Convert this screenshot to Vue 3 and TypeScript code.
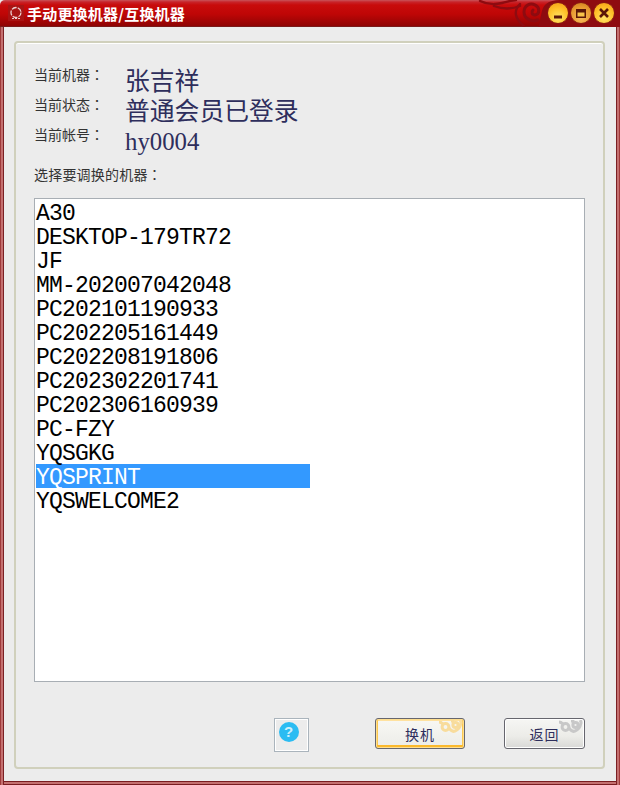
<script setup lang="ts">
const machines: string[] = [
  'A30', 'DESKTOP-179TR72', 'JF', 'MM-202007042048', 'PC202101190933', 'PC202205161449',
  'PC202208191806', 'PC202302201741', 'PC202306160939', 'PC-FZY', 'YQSGKG', 'YQSPRINT', 'YQSWELCOME2',
]
const selected = 'YQSPRINT'
const infos = [
  { label: '当前机器：', value: '张吉祥' },
  { label: '当前状态：', value: '普通会员已登录' },
  { label: '当前帐号：', value: 'hy0004' },
]
</script>

<template>
  <div class="window">
    <header class="titlebar">
      <svg class="logo" width="16" height="16" viewBox="0 0 16 16">
        <rect width="16" height="16" fill="#a81414" />
        <circle cx="8" cy="7.5" r="5" fill="none" stroke="#ecd0d0" stroke-width="1.3" stroke-dasharray="5 1.2" />
        <path d="M4 13.5h8" stroke="#ecd0d0" stroke-width="1" stroke-dasharray="2 1" />
      </svg>
      <span class="title">手动更换机器/互换机器</span>
      <svg class="swirl" width="146" height="27" viewBox="0 0 146 27">
        <path d="M64 27c4-8 2-18 8-23 4-3 8-4 14-4h60v27z" fill="#8e0b10" />
        <g fill="none" stroke="#8e0b10" stroke-width="2.4" stroke-linecap="round">
          <path d="M6 1c6 3 14 4 22 2 5-1 10-3 14-3" />
          <path d="M20 6c8 3 18 3 26 0" />
          <path d="M64 20c-7 3-14-2-14-8 0-6 6-10 11-7 5 2 5 9 0 10-3 0-4-3-2-5" stroke-width="3" />
          <path d="M46 4c-3 3-5 6-4 11 1 5 4 8 8 11" />
        </g>
      </svg>
      <div class="controls">
        <button class="ctl">
          <svg width="22" height="22" viewBox="0 0 22 22"><rect x="7" y="13.5" width="8" height="3" fill="#5b1708" /></svg>
        </button>
        <button class="ctl muted">
          <svg width="22" height="22" viewBox="0 0 22 22"><rect x="6" y="7" width="10" height="9" fill="#5b1708" /><rect x="7.5" y="10.5" width="7" height="4" fill="#f8c44a" /></svg>
        </button>
        <button class="ctl">
          <svg width="22" height="22" viewBox="0 0 22 22"><path d="M7 7l8 8M15 7l-8 8" stroke="#5b1708" stroke-width="2.6" /></svg>
        </button>
      </div>
    </header>

    <main class="body">
      <section class="panel">
        <div class="infos">
          <div v-for="info in infos" :key="info.label" class="info">
            <span class="label">{{ info.label }}</span>
            <span class="value">{{ info.value }}</span>
          </div>
        </div>
        <div class="pick">选择要调换的机器：</div>
        <ul class="list">
          <li v-for="m in machines" :key="m" class="row" :class="{ selected: m === selected }">{{ m }}</li>
        </ul>
        <footer class="actions">
          <button class="help">
            <span class="help-dot">?</span>
          </button>
          <button class="btn primary">
            <svg class="curl" width="24" height="16" viewBox="0 0 24 16"><g fill="none" stroke="#f8dc9c" stroke-width="3"><circle cx="6.5" cy="7" r="3.4" /><circle cx="16.5" cy="5" r="2.6" /><path d="M0 2c2 0 3 1 4 2M10 8c2 3 4 4 6 3 3-1 5-3 6-8 0-1 0-2-1-3M12 1c1 0 2 0 3 1" /></g></svg>
            换机
          </button>
          <button class="btn">
            <svg class="curl" width="24" height="16" viewBox="0 0 24 16"><g fill="none" stroke="#c8c8c8" stroke-width="3"><circle cx="6.5" cy="7" r="3.4" /><circle cx="16.5" cy="5" r="2.6" /><path d="M0 2c2 0 3 1 4 2M10 8c2 3 4 4 6 3 3-1 5-3 6-8 0-1 0-2-1-3M12 1c1 0 2 0 3 1" /></g></svg>
            返回
          </button>
        </footer>
      </section>
    </main>
  </div>
</template>

<style>
html, body { margin: 0; padding: 0; background: #ececec; }
</style>

<style scoped>
.window {
  width: 620px;
  height: 785px;
  box-sizing: border-box;
  display: flex;
  flex-direction: column;
  font-family: "Noto Sans CJK TC", "Noto Sans CJK SC", "Liberation Sans", sans-serif;
  background: #ececec;
  overflow: hidden;
}
.titlebar {
  position: relative;
  flex: none;
  height: 27px;
  display: flex;
  align-items: center;
  padding-left: 8px;
  gap: 3px;
  box-sizing: border-box;
  border-radius: 5px 5px 0 0;
  border-bottom: 1px solid #7a1a1a;
  background: linear-gradient(#c9545a 0, #c8242a 2px, #c80b0b 5px, #bf0606 14px, #8f0404 26px);
}
.logo { flex: none; }
.title {
  font-size: 15px;
  font-weight: 700;
  line-height: 27px;
  letter-spacing: .2px;
  color: #fff;
}
.swirl { position: absolute; right: 0; top: 0; }
.controls {
  position: absolute;
  right: 5px;
  top: 2px;
  display: flex;
  gap: 1px;
}
.ctl {
  width: 22px;
  height: 22px;
  padding: 0;
  border: 1px solid #8a1a10;
  box-sizing: border-box;
  border-radius: 50%;
  background: radial-gradient(circle at 50% 75%, #ffe368 0, #ffc32c 50%, #f49a10 100%);
  display: block;
  overflow: hidden;
}
.ctl svg { display: block; margin: -1px; }
.ctl.muted { background: radial-gradient(circle at 50% 75%, #f8b85a 0, #e89a30 60%, #c87818 100%); }

.body {
  flex: 1;
  min-height: 0;
  box-sizing: border-box;
  padding: 14px 15px 16px 14px;
  box-shadow:
    inset 1px 0 #a03a3a, inset -1px 0 #a03a3a,
    inset 3px 0 #c47070, inset -3px 0 #c47070,
    inset 4px 0 #7a2024, inset -4px 0 #7a2024,
    inset 0 -1px #7a1c20, inset 0 -3px #c47070, inset 0 -4px #7a1c20;
}
.panel {
  height: 100%;
  box-sizing: border-box;
  border: 2px solid #d0d0bc;
  border-radius: 4px;
  box-shadow: inset 0 1px #fff;
  padding: 20px 18px 0;
  display: flex;
  flex-direction: column;
}
.infos { display: flex; flex-direction: column; }
.info {
  display: flex;
  height: 30px;
  align-items: flex-start;
}
.label {
  width: 91px;
  flex: none;
  font-size: 14px;
  line-height: 30px;
  height: 24px;
  color: #333;
  margin-top: -4px;
}
.value {
  font-size: 24.8px;
  font-family: "Liberation Serif", "Noto Sans CJK SC", serif;
  line-height: 30px;
  color: #2e2e5c;
  margin-top: 4px;
}
.pick {
  margin-top: 11px;
  font-size: 14px;
  line-height: 20px;
  letter-spacing: .2px;
  color: #333;
}
.list {
  list-style: none;
  margin: 14px 0 0;
  padding: 1px 0 0 1px;
  height: 484px;
  box-sizing: border-box;
  border: 1px solid #a8aeb4;
  background: #fff;
}
.row {
  width: 274px;
  height: 24px;
  line-height: 28px;
  font-family: "Liberation Mono", monospace;
  font-size: 23px;
  letter-spacing: -.8px;
  color: #000;
  white-space: nowrap;
}
.row.selected { background: #3399ff; color: #fff; }
.actions {
  position: relative;
  flex: 1;
  display: flex;
  align-items: flex-start;
  padding-top: 36px;
  padding-left: 240px;
  font-size: 14px;
}
.help {
  width: 35px;
  height: 34px;
  padding: 0;
  box-sizing: border-box;
  border: 1px solid #aab4bc;
  box-shadow: inset 0 0 0 1px #fff;
  background: #ececec;
  display: flex;
  align-items: center;
  justify-content: center;
  margin-right: 66px;
}
.help-dot {
  width: 20px;
  height: 20px;
  border-radius: 50%;
  background: #2bbcf2;
  color: #cdf0fc;
  font: 700 15px/20px "Liberation Sans", sans-serif;
  text-align: center;
  margin: 0 6px 6px 0;
}
.btn {
  position: relative;
  width: 81px;
  height: 31px;
  padding: 0;
  box-sizing: border-box;
  border: 1px solid #66666e;
  border-radius: 3px;
  box-shadow: inset 0 0 0 1px #fff;
  background: linear-gradient(#f6f6f4, #ecece8 60%, #d8d8d6);
  color: #2e2e5c;
  font-family: "Noto Sans CJK SC", sans-serif;
  font-size: 14px;
  letter-spacing: 1px;
  overflow: hidden;
}
.btn.primary {
  width: 90px;
  margin-right: 39px;
  border-color: #66666e;
  box-shadow: inset 0 0 0 1px #ffdf90, inset 0 -3px #fbb92c, inset 2px 0 #fbc850, inset -2px 0 #fbc850, inset 0 2px #ffe2a0;
  background: linear-gradient(#f8f8f4, #ecece8);
}
.curl { position: absolute; right: 1px; top: 1px; }
</style>
